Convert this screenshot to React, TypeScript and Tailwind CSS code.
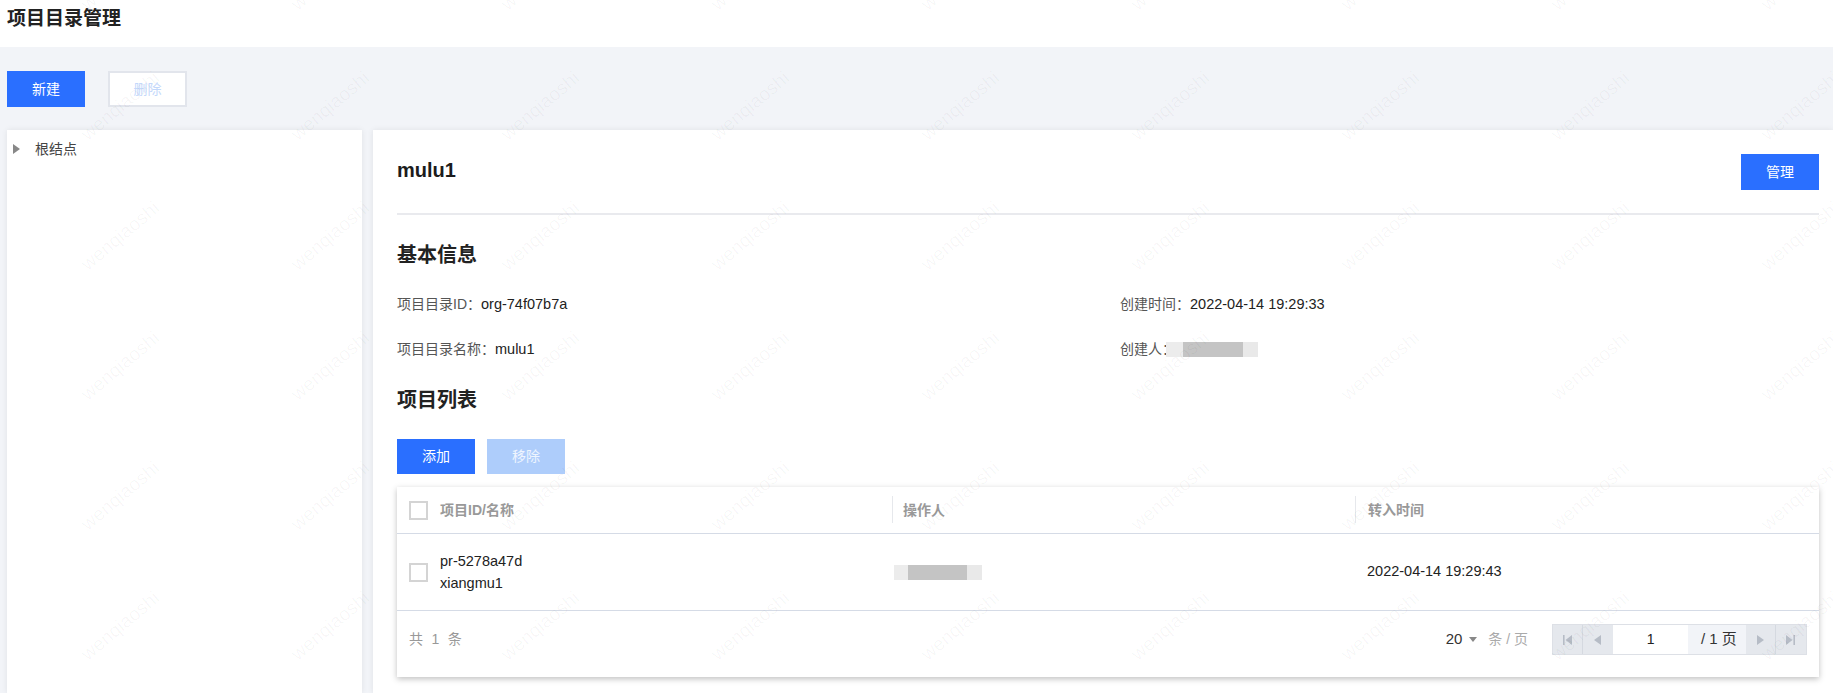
import React from "react";

const Triangle = ({ dir, className }: { dir: "left" | "right"; className?: string }) => (
  <svg width="7" height="10" viewBox="0 0 7 10" className={className}>
    <path d={dir === "left" ? "M7 0v10L0 5z" : "M0 0v10l7-5z"} fill="currentColor" />
  </svg>
);

const EdgeIcon = ({ dir }: { dir: "first" | "last" }) => (
  <svg width="10" height="10" viewBox="0 0 10 10">
    {dir === "first" ? (
      <path d="M1 0h1.6v10H1zM10 0v10L3.5 5z" fill="currentColor" />
    ) : (
      <path d="M7.4 0H9v10H7.4zM0 0v10l6.5-5z" fill="currentColor" />
    )}
  </svg>
);

const PageBtn = ({ children, border = true }: { children: React.ReactNode; border?: boolean }) => (
  <div
    className={`w-[30px] h-full flex items-center justify-center bg-[#e5e8ed] text-[#b6bcc6] ${border ? "border-r border-[#d5d9e0]" : ""}`}
  >
    {children}
  </div>
);

const Checkbox = () => <div className="w-[19px] h-[19px] border-2 border-[#d4d4d4] bg-white shrink-0" />;

const Blurred = () => (
  <div className="flex h-[15px]">
    <div className="w-[14px] bg-[#ececec]" />
    <div className="w-[59px] bg-[#c4c4c4]" />
    <div className="w-[15px] bg-[#e9e9e9]" />
  </div>
);

// faint repeating watermark over the whole console
const Watermark = () => (
  <div className="absolute left-[-194px] top-[-89px] grid grid-cols-[repeat(11,210px)] auto-rows-[130px] pointer-events-none">
    {Array.from({ length: 77 }).map((_, i) => (
      <div key={i} className="flex items-center justify-center">
        <span className="-rotate-[40deg] text-[19px] text-black/[0.035]">wenqiaoshi</span>
      </div>
    ))}
  </div>
);

export default function App() {
  return (
    <div className="relative w-[1833px] h-[693px] overflow-hidden flex flex-col bg-[#f2f4f8] font-['Liberation_Sans','Noto_Sans_CJK_SC',sans-serif] text-[14px] text-[#222]">
      <div className="h-[47px] bg-white px-[7px] flex items-center shrink-0">
        <h1 className="text-[19px] leading-[34px] pb-[9px] font-bold text-[#222]">项目目录管理</h1>
      </div>

      <div className="flex gap-[23px] pl-[7px] pt-[24px] shrink-0">
        <button className="w-[78px] h-[36px] bg-[#2a6fff] text-white">新建</button>
        <button className="w-[79px] h-[36px] bg-white border-2 border-[#e2e5ec] text-[#c3d8fb]">删除</button>
      </div>

      <div className="flex-1 min-h-0 flex gap-[11px] pl-[7px] mt-[23px]">
        <aside className="w-[355px] bg-white shadow-[0_0_6px_rgba(0,0,0,0.08)] shrink-0">
          <div className="flex items-center h-[20px] mt-[9px] pl-[6px]">
            <Triangle dir="right" className="text-[#888]" />
            <span className="ml-[15px] text-[#444]">根结点</span>
          </div>
        </aside>

        <main className="flex-1 bg-white pl-[24px] pr-[14px] shadow-[0_0_6px_rgba(0,0,0,0.08)]">
          <div className="flex justify-between h-[85px] pt-[24px] border-b-2 border-[#e9eaee]">
            <h2 className="text-[20px] leading-[32px] font-bold text-[#1c1c1c]">mulu1</h2>
            <button className="w-[78px] h-[36px] bg-[#2a6fff] text-white">管理</button>
          </div>

          <h3 className="mt-[26px] text-[20px] leading-[28px] font-bold">基本信息</h3>
          <div className="mt-[25px] grid grid-cols-[723px_1fr] gap-y-[25px] leading-[20px]">
            <div>
              <span className="text-[#555]">项目目录ID：</span>
              <span className="text-[14.5px]">org-74f07b7a</span>
            </div>
            <div>
              <span className="text-[#555]">创建时间：</span>
              <span className="text-[14.5px]">2022-04-14 19:29:33</span>
            </div>
            <div>
              <span className="text-[#555]">项目目录名称：</span>
              <span className="text-[14.5px]">mulu1</span>
            </div>
            <div className="flex items-center">
              <span className="text-[#555]">创建人：</span>
              <div className="-ml-[10px] flex h-[15px] w-[92px]">
                <div className="w-[17px] bg-[#ececec]" />
                <div className="w-[60px] bg-[#c4c4c4]" />
                <div className="w-[15px] bg-[#e9e9e9]" />
              </div>
            </div>
          </div>

          <h3 className="mt-[27px] text-[20px] leading-[28px] font-bold">项目列表</h3>
          <div className="mt-[25px] flex gap-[12px]">
            <button className="w-[78px] h-[35px] bg-[#2a6fff] text-white">添加</button>
            <button className="w-[78px] h-[35px] bg-[#aecdfb] text-white/80">移除</button>
          </div>

          <div className="mt-[13px] h-[190px] bg-white shadow-[0_2px_6px_rgba(0,0,0,0.25)] flex flex-col">
            <div className="h-[47px] flex border-b border-[#d5dbe6] font-bold text-[#999] shrink-0">
              <div className="w-[495px] flex items-center pl-[12px] gap-[12px]">
                <Checkbox />
                <span>项目ID/名称</span>
              </div>
              <div className="w-[463px] flex items-center pl-[11px] relative">
                <div className="absolute left-0 top-[9px] h-[27px] w-px bg-[#e6e8ec]" />
                操作人
              </div>
              <div className="flex-1 flex items-center pl-[13px] relative">
                <div className="absolute left-0 top-[9px] h-[27px] w-px bg-[#e6e8ec]" />
                转入时间
              </div>
            </div>

            <div className="h-[77px] flex border-b border-[#d5dbe6] shrink-0 text-[14.5px]">
              <div className="w-[495px] flex items-center pl-[12px] gap-[12px]">
                <Checkbox />
                <div className="leading-[22px]">
                  <div>pr-5278a47d</div>
                  <div>xiangmu1</div>
                </div>
              </div>
              <div className="w-[463px] flex items-center pl-[2px]">
                <Blurred />
              </div>
              <div className="flex-1 flex items-center pl-[12px]">2022-04-14 19:29:43</div>
            </div>

            <div className="flex-1 flex justify-between pt-[13px] pl-[12px] pr-[12px]">
              <div className="h-[30px] flex items-center text-[#999] tracking-[0.5px] gap-[8px]">
                <span>共</span>
                <span>1</span>
                <span>条</span>
              </div>
              <div className="flex items-start">
                <div className="h-[30px] flex items-center">
                  <span className="text-[15px] text-[#333]">20</span>
                  <span className="ml-[7px] w-0 h-0 border-x-[4.5px] border-x-transparent border-t-[5px] border-t-[#888]" />
                  <span className="ml-[11px] text-[#aaa]">条 / 页</span>
                </div>
                <div className="ml-[24px] w-[255px] h-[31px] flex border border-[#dde0e6] box-border">
                  <PageBtn>
                    <EdgeIcon dir="first" />
                  </PageBtn>
                  <PageBtn border={false}>
                    <Triangle dir="left" />
                  </PageBtn>
                  <div className="w-[76px] h-full bg-white flex items-center justify-center text-[#222]">1</div>
                  <div className="w-[58px] h-full pl-[3px] bg-[#f2f4f8] flex items-center justify-center text-[15px] text-[#333]">
                    / 1 页
                  </div>
                  <PageBtn>
                    <Triangle dir="right" />
                  </PageBtn>
                  <PageBtn border={false}>
                    <EdgeIcon dir="last" />
                  </PageBtn>
                </div>
              </div>
            </div>
          </div>
        </main>
      </div>

      <Watermark />
    </div>
  );
}
